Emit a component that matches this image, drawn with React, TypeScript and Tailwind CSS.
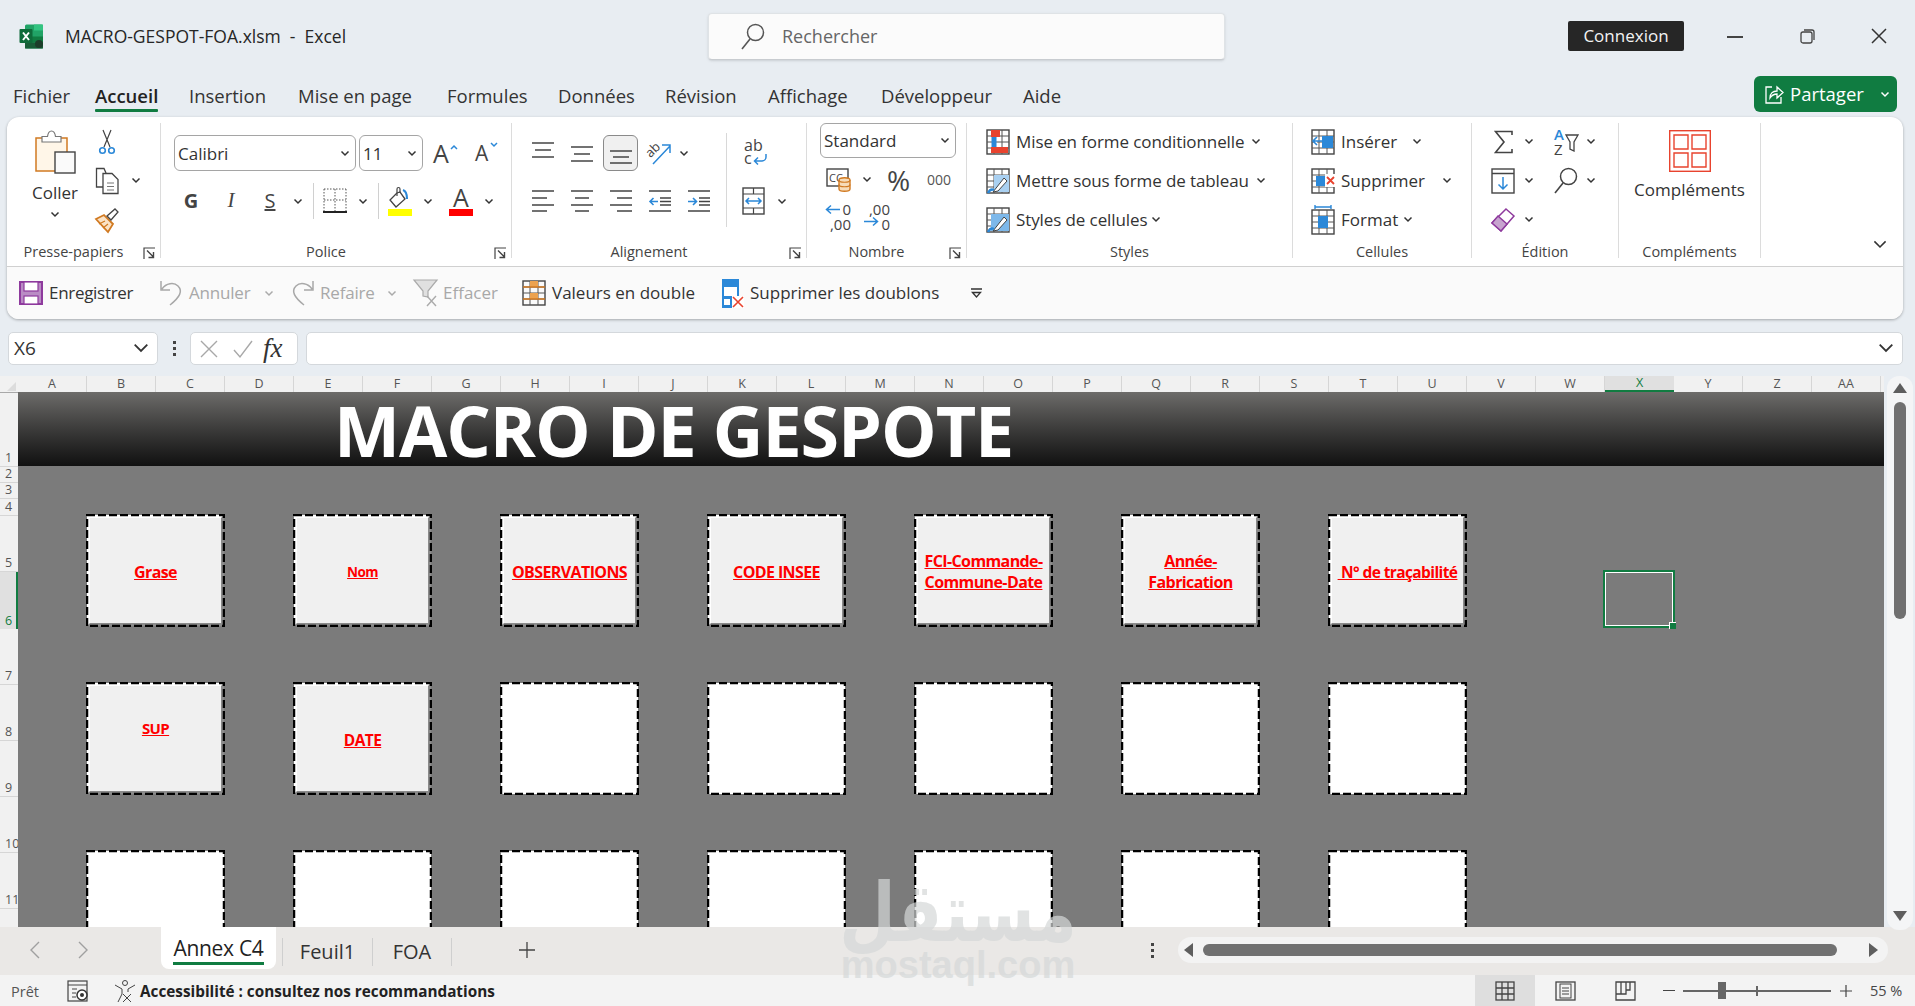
import React from "react";

const DARK = "#444444";
const BLUE = "#2b88d8";
const ORANGE = "#d17a22";
const RED = "#e8432e";

// small dropdown arrow used all over the ribbon
const Chev = ({ color = "#333", w = 10 }: { color?: string; w?: number }) => (
    <svg width={w} height={w * 0.7} viewBox="0 0 10 7" fill="none" className="shrink-0">
        <path d="M1.5 1.5 5 5l3.5-3.5" stroke={color} strokeWidth={w > 10 ? 1 : 1.5} />
    </svg>
);

const Icon = ({ w = 24, h = 24, children }: { w?: number; h?: number; children: React.ReactNode }) => (
    <svg width={w} height={h} viewBox={`0 0 ${w} ${h}`} fill="none" className="shrink-0 overflow-visible">
        {children}
    </svg>
);

const Launcher = () => (
    <Icon w={13} h={13}>
        <path d="M1 12V1h11" stroke={DARK} strokeWidth="1.2" />
        <path d="M4 3.5 10.5 10M10.5 5v5.5H5.5" stroke={DARK} strokeWidth="1.4" />
    </Icon>
);

const ExcelLogo = () => (
    <Icon w={25} h={25}>
        <rect x="6" y="0.5" width="18" height="24" rx="1.5" fill="#21a366" />
        <rect x="15" y="0.5" width="9" height="6" fill="#33c481" />
        <rect x="6" y="12.5" width="9" height="6" fill="#107c41" />
        <rect x="6" y="18.5" width="18" height="6" fill="#185c37" />
        <rect x="15" y="12.5" width="9" height="6" fill="#107c41" />
        <rect x="0.5" y="5" width="13" height="14" rx="1" fill="#0f6b3a" />
        <path d="M4 8.5 10 16M10 8.5 4 16" stroke="#fff" strokeWidth="2" />
        <circle cx="20" cy="20" r="4" fill="#1c3d2a" />
    </Icon>
);

const PasteIcon = () => (
    <Icon w={41} h={44}>
        <rect x="1" y="8" width="31" height="33" fill="#fff6e8" stroke={ORANGE} strokeWidth="1.5" />
        <path d="M7 12V6.5h5.5C13 3 14.5 1 16.5 1S20 3 20.5 6.5H26V12z" fill="#fff" stroke="#777" strokeWidth="1.2" />
        <rect x="20" y="22" width="20" height="21" fill="#fafafa" stroke={DARK} strokeWidth="1.4" />
    </Icon>
);

const ScissorsIcon = () => (
    <Icon w={18} h={26}>
        <path d="M5 1 12 18M13 1 6 18" stroke={DARK} strokeWidth="1.2" />
        <circle cx="4.5" cy="21.5" r="2.8" stroke={BLUE} strokeWidth="1.6" />
        <circle cx="13.5" cy="21.5" r="2.8" stroke={BLUE} strokeWidth="1.6" />
    </Icon>
);

const CopyIcon = () => (
    <Icon w={25} h={28}>
        <path d="M8 20H1.5V1.5H9L11 6" stroke={DARK} strokeWidth="1.3" />
        <path d="M8 6.5h9l6 6v14H8z" fill="#fff" stroke={DARK} strokeWidth="1.3" />
        <path d="M12 16h7M12 19.5h7M12 23h7" stroke="#777" />
    </Icon>
);

const BrushIcon = () => (
    <Icon w={25} h={26}>
        <path d="M1 12 9 8l9 9-5 8z" fill="#fbe3c6" stroke={ORANGE} strokeWidth="1.8" />
        <path d="M4 17l6-3M8 21l5-4" stroke={ORANGE} strokeWidth="1.3" />
        <path d="M12 9l8-7 3 3-7 8z" fill="#fff" stroke={DARK} strokeWidth="1.3" />
    </Icon>
);

const AlignV = ({ pos }: { pos: "top" | "mid" | "bot" }) => {
    const y = pos === "top" ? [2, 9, 16] : pos === "mid" ? [6, 13, 20] : [10, 16, 22];
    return (
        <Icon w={22} h={24}>
            {y.map((v, i) => (
                <path key={i} d={i === 1 ? `M3 ${v}h16` : `M0 ${v}h22`} stroke={DARK} strokeWidth="1.6" />
            ))}
        </Icon>
    );
};

const AlignH = ({ kind }: { kind: "l" | "c" | "r" }) => {
    const d =
        kind === "l"
            ? "M0 3h22M0 10h15M0 17h22M0 23h15"
            : kind === "c"
              ? "M0 3h22M4 10h14M0 17h22M4 23h14"
              : "M0 3h22M7 10h15M0 17h22M7 23h15";
    return (
        <Icon w={22} h={26}>
            <path d={d} stroke={DARK} strokeWidth="1.6" />
        </Icon>
    );
};

const IndentIcon = ({ dir }: { dir: "l" | "r" }) => (
    <Icon w={22} h={26}>
        <path d="M0 3h22M0 23h22M11 10h11M11 17h11M11 13.5h11" stroke={DARK} strokeWidth="1.6" />
        {dir === "l" ? (
            <path d="M9 13.5H1M4.5 10 1 13.5 4.5 17" stroke={BLUE} strokeWidth="1.6" />
        ) : (
            <path d="M0 13.5h8M5 10l3.500 3.500L5 17" stroke={BLUE} strokeWidth="1.6" />
        )}
    </Icon>
);

const OrientIcon = () => (
    <Icon w={26} h={26}>
        <text x="0" y="14" fontSize="13" fill={DARK} transform="rotate(-45 7 12)" fontFamily="Open Sans, sans-serif">ab</text>
        <path d="M6 24 23 6M15 5h8v8" stroke={BLUE} strokeWidth="1.5" />
    </Icon>
);

const WrapIcon = () => (
    <div className="relative w-[24px] h-[28px] leading-[13px] text-[16px] text-[#444]">
        <div>ab</div>
        <div>c</div>
        <svg width="15" height="11" viewBox="0 0 15 11" fill="none" className="absolute left-[9px] top-[15px]">
            <path d="M13 0v3a4 4 0 0 1-4 4H2M5 3.5 1.5 7 5 10.5" stroke={BLUE} strokeWidth="1.5" />
        </svg>
    </div>
);

const MergeIcon = () => (
    <Icon w={23} h={28}>
        <rect x="1" y="1" width="21" height="26" stroke={DARK} strokeWidth="1.4" />
        <path d="M1 7h21M1 21h21M11.5 1v6M11.5 21v6" stroke={DARK} strokeWidth="1.2" />
        <path d="M4 14h15M7 11l-3 3 3 3M16 11l3 3-3 3" stroke={BLUE} strokeWidth="1.5" />
    </Icon>
);

const BorderIcon = () => (
    <Icon w={24} h={28}>
        <path d="M1 2h22M1 2v22M23 2v22M12 2v22M1 13h22" stroke="#555" strokeDasharray="1.5 1.5" />
        <path d="M0 25h24" stroke="#222" strokeWidth="2" />
    </Icon>
);

const FillIcon = () => (
    <Icon w={24} h={30}>
        <path d="M9 7 2 14l6 7 9-8-5-7z" fill="#fff" stroke={DARK} strokeWidth="1.3" />
        <path d="M9 10V3c0-2 3-2 3 0v4" stroke={DARK} strokeWidth="1.2" />
        <path d="M15 4c3 1 4 4 4 9" stroke={BLUE} strokeWidth="2.2" />
        <rect x="0" y="23" width="24" height="7" fill="#ffff00" />
    </Icon>
);

const FontColorIcon = () => (
    <div className="flex flex-col items-center w-[24px] h-[30px]">
        <span className="text-[25px] leading-[23px] text-[#444]">A</span>
        <span className="w-full h-[7px] bg-[#ff0000]" />
    </div>
);

const SheetGrid = ({ children }: { children?: React.ReactNode }) => (
    <Icon w={24} h={26}>
        <rect x="1" y="1" width="22" height="24" stroke={DARK} strokeWidth="1.4" />
        <path d="M1 7h22M1 13h22M1 19h22M8 1v24M16 1v24" stroke="#555" />
        {children}
    </Icon>
);

const CondIcon = () => (
    <SheetGrid>
        <path d="M8 4v19" stroke={BLUE} strokeWidth="5" />
        <rect x="5" y="1" width="9" height="7" fill={RED} />
        <rect x="5" y="18" width="17" height="6" fill={RED} />
    </SheetGrid>
);

const TableIcon = () => (
    <SheetGrid>
        <rect x="8" y="7" width="15" height="17" fill="#a9d0f1" />
        <path d="M7 24 18 10l3 3-9 10z" fill="#fff" stroke={DARK} />
        <path d="M2 25c2-4 4-4 6-3" stroke={BLUE} strokeWidth="2.5" />
    </SheetGrid>
);

const CellStyleIcon = () => (
    <SheetGrid>
        <rect x="5" y="7" width="18" height="17" fill="#7db8ea" />
        <path d="M7 24 18 10l3 3-9 10z" fill="#fff" stroke={DARK} />
        <path d="M2 25c2-4 4-4 6-3" stroke={BLUE} strokeWidth="2.5" />
    </SheetGrid>
);

const InsertIcon = () => (
    <SheetGrid>
        <rect x="11" y="7" width="11" height="12" fill={BLUE} />
        <path d="M12 12H2M6 8l-4 4 4 4" stroke={BLUE} strokeWidth="1.6" fill="#fff" />
    </SheetGrid>
);

const DeleteIcon = () => (
    <SheetGrid>
        <rect x="5" y="8" width="9" height="10" fill={BLUE} />
        <rect x="14" y="6" width="10" height="13" fill="#fff" />
        <path d="M16 9l7 7M23 9l-7 7" stroke={RED} strokeWidth="1.8" />
    </SheetGrid>
);

const FormatIcon = () => (
    <Icon w={24} h={30}>
        <path d="M4 2h16M4 0v4M20 0v4" stroke={BLUE} strokeWidth="1.4" />
        <rect x="1" y="5" width="22" height="24" stroke={DARK} strokeWidth="1.4" />
        <path d="M1 11h22M1 17h22M1 23h22M8 5v24M16 5v24" stroke="#555" />
        <rect x="7" y="11" width="10" height="12" fill={BLUE} />
    </Icon>
);

const SumIcon = () => (
    <Icon w={19} h={24}>
        <path d="M18 5V1.5H1.5L10 12 1.5 22.5H18V19" stroke={DARK} strokeWidth="1.6" />
    </Icon>
);

const SortIcon = () => (
    <div className="relative w-[24px] h-[30px] text-[15px] leading-[15px] text-[#444]">
        <div className="text-[#2b88d8] font-semibold">A</div>
        <div>Z</div>
        <svg width="14" height="18" viewBox="0 0 14 18" fill="none" className="absolute left-[11px] top-[7px]">
            <path d="M1 1h12L9 8v9l-4-2V8z" stroke={DARK} strokeWidth="1.3" />
        </svg>
    </div>
);

const FillDownIcon = () => (
    <Icon w={24} h={26}>
        <rect x="1" y="1" width="22" height="24" stroke={DARK} strokeWidth="1.4" />
        <path d="M1 5.5h22" stroke={DARK} strokeWidth="1.3" />
        <path d="M12 9v12M7.5 16.5 12 21l4.500-4.500" stroke={BLUE} strokeWidth="1.5" />
    </Icon>
);

const SearchIcon = ({ color = DARK }: { color?: string }) => (
    <Icon w={24} h={27}>
        <circle cx="14.5" cy="9.5" r="8" stroke={color} strokeWidth="1.5" />
        <path d="M9 16 1 26" stroke={color} strokeWidth="1.6" />
    </Icon>
);

const EraserIcon = () => (
    <Icon w={24} h={24}>
        <path d="M15 1 23 8 10 23 1 15z" fill="#fff" stroke="#8e3a9d" strokeWidth="1.5" />
        <path d="M7 8 16 16 10 23 1 15z" fill="#c7a4cf" stroke="#8e3a9d" strokeWidth="1.5" />
    </Icon>
);

const AddinsIcon = () => (
    <Icon w={42} h={42}>
        <rect x="0.7" y="0.7" width="40.6" height="40.6" stroke={RED} strokeWidth="1.4" />
        <path d="M5 5h14v14H5zM23 5h14v14H23zM5 23h14v14H5zM23 23h14v14H23z" stroke={RED} strokeWidth="1.4" />
    </Icon>
);

const SaveIcon = () => (
    <Icon w={24} h={24}>
        <path d="M1 1h22v22H1z" fill="#b98cc4" stroke="#8e3a9d" strokeWidth="2" />
        <rect x="5" y="1" width="14" height="9" fill="#fff" stroke="#8e3a9d" strokeWidth="1.2" />
        <rect x="5" y="15" width="14" height="8" fill="#fff" stroke="#8e3a9d" strokeWidth="1.2" />
    </Icon>
);

const UndoIcon = ({ flip }: { flip?: boolean }) => (
    <svg width="23" height="28" viewBox="0 0 23 28" fill="none" className={flip ? "shrink-0 -scale-x-100" : "shrink-0"}>
        <path d="M1 2v9h9M2 10c4-6 12-7 16-3 5 5 2 11-8 19" stroke="#a8a8a8" strokeWidth="1.5" />
    </svg>
);

const ClearFilterIcon = () => (
    <Icon w={25} h={28}>
        <path d="M1 1h23l-9 11v6l-5-1v-5z" fill="#e0e0e0" stroke="#aaa" strokeWidth="1.2" />
        <path d="M14 17l9 10M23 17l-9 10" stroke="#aaa" strokeWidth="1.4" />
    </Icon>
);

const DupIcon = () => (
    <Icon w={24} h={26}>
        <rect x="1" y="1" width="22" height="24" stroke={DARK} strokeWidth="1.4" />
        <path d="M1 7h22M1 13h22M1 19h22M8 1v24M16 1v24" stroke="#555" />
        <rect x="8" y="1" width="8" height="6" fill="#eca24f" />
        <rect x="8" y="13" width="8" height="6" fill="#eca24f" />
        <path d="M1 7h22M1 19h22" stroke={ORANGE} strokeWidth="1.5" />
    </Icon>
);

const RemoveDupIcon = () => (
    <Icon w={22} h={29}>
        <rect x="0" y="0" width="17" height="29" fill={BLUE} />
        <rect x="2" y="8" width="13" height="9" fill="#fff" />
        <rect x="2" y="20" width="6" height="6" fill="#fff" />
        <rect x="10" y="17" width="12" height="12" fill="#fff" />
        <path d="M11 18l10 10M21 18 11 28" stroke={RED} strokeWidth="1.6" />
    </Icon>
);

const CcyIcon = () => (
    <Icon w={25} h={24}>
        <rect x="1" y="1" width="21" height="17" fill="#fff" stroke={DARK} strokeWidth="1.4" />
        <text x="3" y="14" fontSize="11" fill={DARK} fontFamily="Open Sans, sans-serif">CC</text>
        <path d="M13 12c0-3 11-3 11 0v9c0 3-11 3-11 0z" fill="#f7dcb9" stroke={ORANGE} strokeWidth="1.4" />
        <path d="M13 12c0 3 11 3 11 0M13 16.5c0 3 11 3 11 0" stroke={ORANGE} strokeWidth="1.2" />
    </Icon>
);

const DecimalIcon = ({ more }: { more?: boolean }) => (
    <div className="relative w-[26px] h-[30px] text-[15px] leading-[15px] text-[#444] text-right">
        <div>{more ? ",00" : "0"}</div>
        <div>{more ? "0" : ",00"}</div>
        <svg width="15" height="11" viewBox="0 0 15 11" fill="none" className={more ? "absolute left-0 top-[14px]" : "absolute left-0 top-[2px]"}>
            {more ? (
                <path d="M0 5.5h13M9 1.5l4.500 4-4.500 4" stroke={BLUE} strokeWidth="1.5" />
            ) : (
                <path d="M15 5.5H2M6 1.5l-4.500 4 4.500 4" stroke={BLUE} strokeWidth="1.5" />
            )}
        </svg>
    </div>
);

const Combo = ({ label, className }: { label: string; className: string }) => (
    <div className={`flex items-center justify-between pl-[3px] pr-[5px] bg-white border border-[#a5a5a5] rounded-[6px] text-[#333] ${className}`}>
        <span className="text-[17px] leading-none">{label}</span>
        <Chev />
    </div>
);

const Group = ({ label, w, launcher, children }: { label: string; w: string; launcher?: boolean; children: React.ReactNode }) => (
    <div className={`${w} h-[135px] border-r border-[#dcdcdc] shrink-0 flex flex-col`}>
        <div className="h-[119px] shrink-0">{children}</div>
        <div className={launcher ? "relative h-[20px] pr-[20px] flex items-center justify-center text-[14.5px] text-[#444]" : "relative h-[20px] flex items-center justify-center text-[14.5px] text-[#444]"}>
            {label}
            {launcher && (
                <span className="absolute right-[4px] top-[5px]">
                    <Launcher />
                </span>
            )}
        </div>
    </div>
);

const Row39 = ({ children, className = "" }: { children: React.ReactNode; className?: string }) => (
    <div className={`h-[39px] flex items-center ${className}`}>{children}</div>
);

const TabLink = ({ label, w, active }: { label: string; w: string; active?: boolean }) => (
    <div className={`${w} shrink-0 h-[36px] flex items-start pt-[7px]`}>
        <span className={active ? "relative font-semibold text-[#222] text-[18.5px] leading-[26px]" : "text-[#333] text-[18.5px] leading-[26px] whitespace-nowrap"}>
            {label}
            {active && <span className="absolute left-0 right-0 top-[26px] h-[3px] bg-[#107c41] rounded-[1px]" />}
        </span>
    </div>
);

const BOXES: { lines?: string[]; size?: string; blank?: boolean; offset?: string }[] = [
    { lines: ["Grase"], size: "text-[16px]", offset: "pt-[4px]" },
    { lines: ["Nom"], size: "text-[13.5px]", offset: "pt-[4px]" },
    { lines: ["OBSERVATIONS"], size: "text-[16px]", offset: "pt-[4px]" },
    { lines: ["CODE INSEE"], size: "text-[16px]", offset: "pt-[4px]" },
    { lines: ["FCI-Commande-", "Commune-Date"], size: "text-[16px]", offset: "pt-[2px]" },
    { lines: ["Année-", "Fabrication"], size: "text-[16px]", offset: "pt-[2px]" },
    { lines: ["\u00a0N° de traçabilité"], size: "text-[15.5px]", offset: "pt-[4px]" },
    { lines: ["SUP"], size: "text-[15px]", offset: "pb-[20px]" },
    { lines: ["DATE"], size: "text-[15.5px]", offset: "pt-[4px]" },
    ...Array.from({ length: 12 }, () => ({ blank: true })),
];

const ShapeBox = ({ lines, size, blank, offset }: { lines?: string[]; size?: string; blank?: boolean; offset?: string }) => (
    <div className="relative w-[139px] h-[113px]">
        {blank ? (
            <div className="absolute inset-[1px] bg-white" />
        ) : (
            <div className={`absolute inset-[1px] flex flex-col items-center justify-center bg-[#f0f0f0] border-t-[3px] border-l-[3px] border-t-white border-l-white border-r-[3px] border-b-[3px] border-r-[#8a8a8a] border-b-[#8a8a8a] font-bold tracking-[-0.6px] leading-[21px] text-[#ff0000] underline ${size} ${offset || ""}`}>
                {lines?.map((l) => (
                    <span key={l} className="whitespace-pre">{l}</span>
                ))}
            </div>
        )}
        <svg width="139" height="113" className="absolute inset-0">
            <rect x="1" y="1" width="137" height="111" fill="none" stroke="#000" strokeWidth="2.5" strokeDasharray="8 3" />
        </svg>
    </div>
);

const COLS = "A B C D E F G H I J K L M N O P Q R S T U V W X Y Z AA".split(" ");
const ROWS: [string, string][] = [
    ["1", "h-[74px]"],
    ["2", "h-[16px]"],
    ["3", "h-[16px]"],
    ["4", "h-[17px]"],
    ["5", "h-[56px]"],
    ["6", "h-[57px]"],
    ["7", "h-[56px]"],
    ["8", "h-[56px]"],
    ["9", "h-[56px]"],
    ["10", "h-[56px]"],
    ["11", "h-[56px]"],
];

export default function App() {
    return (
        <div className="relative w-[1915px] h-[1006px] overflow-hidden flex flex-col bg-[#e8edf2] font-['Open_Sans',sans-serif] text-[#333]">
            {/* title bar */}
            <div className="h-[76px] shrink-0 flex items-start">
                <div className="w-[708px] shrink-0 flex items-center h-[25px] mt-[24px] pl-[19px]">
                    <ExcelLogo />
                    <span className="ml-[21px] text-[17.5px] text-[#262626] whitespace-pre">MACRO-GESPOT-FOA.xlsm  -  Excel</span>
                </div>
                <div className="w-[517px] h-[47px] mt-[13px] shrink-0 flex items-center pl-[32px] rounded-[4px] bg-[#fbfbfb] border border-[#dfe3e6] border-b-[#c8ccd0] shadow-sm">
                    <SearchIcon color="#555" />
                    <span className="ml-[17px] text-[18px] text-[#666]">Rechercher</span>
                </div>
                <div className="ml-[343px] mt-[21px] w-[116px] h-[30px] shrink-0 flex items-center justify-center rounded-[2px] bg-[#262626] text-[#f3f3f3] text-[17px]">Connexion</div>
                <div className="ml-[43px] mt-[36px] w-[16px] h-[2px] bg-[#444]" />
                <div className="ml-[57px] mt-[29px]">
                    <Icon w={15} h={15}>
                        <rect x="1" y="3" width="11" height="11" rx="2" stroke={DARK} strokeWidth="1.3" />
                        <path d="M4 1h8a2 2 0 0 1 2 2v8" stroke={DARK} strokeWidth="1.3" />
                    </Icon>
                </div>
                <div className="ml-[56px] mt-[28px]">
                    <Icon w={16} h={16}>
                        <path d="M1 1l14 14M15 1 1 15" stroke="#333" strokeWidth="1.5" />
                    </Icon>
                </div>
            </div>

            {/* tabs */}
            <div className="h-[41px] shrink-0 flex items-start pl-[13px]">
                <TabLink label="Fichier" w="w-[82px]" />
                <TabLink label="Accueil" w="w-[94px]" active />
                <TabLink label="Insertion" w="w-[109px]" />
                <TabLink label="Mise en page" w="w-[149px]" />
                <TabLink label="Formules" w="w-[111px]" />
                <TabLink label="Données" w="w-[107px]" />
                <TabLink label="Révision" w="w-[103px]" />
                <TabLink label="Affichage" w="w-[113px]" />
                <TabLink label="Développeur" w="w-[142px]" />
                <TabLink label="Aide" w="w-[731px]" />
                <div className="w-[143px] h-[36px] shrink-0 flex items-center pl-[11px] rounded-[6px] bg-[#107c41] text-white text-[18.5px]">
                    <Icon w={18} h={20}>
                        <path d="M7 3H1v16h15v-6" stroke="#fff" strokeWidth="1.3" />
                        <path d="M5 14c0-5 3-7 7-7V3l6 5.5-6 5.500V10c-3 0-5 1-7 4z" stroke="#fff" strokeWidth="1.3" />
                    </Icon>
                    <span className="ml-[7px]">Partager</span>
                    <span className="ml-[16px]"><Chev color="#fff" /></span>
                </div>
            </div>

            {/* ribbon */}
            <div className="ml-[7px] w-[1896px] h-[202px] shrink-0 flex flex-col rounded-[12px] overflow-hidden bg-white shadow-[0_1px_3px_rgba(0,0,0,0.3)]">
                <div className="h-[150px] shrink-0 flex pt-[6px] border-b border-[#d0d0d0]">
                    <Group label="Presse-papiers" w="w-[154px]" launcher>
                        <div className="flex">
                            <div className="ml-[8px] w-[80px] flex flex-col items-center pt-[7px]">
                                <PasteIcon />
                                <span className="mt-[7px] text-[17px] leading-[24px]">Coller</span>
                                <span className="mt-[6px]"><Chev /></span>
                            </div>
                            <div className="flex flex-col -mt-[1px]">
                                <Row39 className="pl-[3px]"><ScissorsIcon /></Row39>
                                <Row39>
                                    <CopyIcon />
                                    <span className="ml-[11px]"><Chev /></span>
                                </Row39>
                                <Row39><BrushIcon /></Row39>
                            </div>
                        </div>
                    </Group>

                    <Group label="Police" w="w-[351px]" launcher>
                        <div className="flex items-center h-[36px] mt-[12px] pl-[13px]">
                            <Combo label="Calibri" className="w-[182px] h-[36px]" />
                            <Combo label="11" className="ml-[3px] w-[64px] h-[36px]" />
                            <div className="ml-[10px] relative w-[24px] text-[25px] leading-none text-[#444]">
                                A<svg width="8" height="6" viewBox="0 0 8 6" fill="none" className="absolute left-[17px] top-[3px]"><path d="M1 5l3-3 3 3" stroke={BLUE} strokeWidth="1.5" /></svg>
                            </div>
                            <div className="ml-[18px] relative w-[22px] text-[21px] leading-none text-[#444]">
                                A<svg width="8" height="6" viewBox="0 0 8 6" fill="none" className="absolute left-[15px] top-[-1px]"><path d="M1 1l3 3 3-3" stroke={BLUE} strokeWidth="1.5" /></svg>
                            </div>
                        </div>
                        <div className="flex items-center h-[36px] mt-[12px] pl-[10px] text-[#444]">
                            <span className="w-[40px] text-center text-[20px] font-bold">G</span>
                            <span className="w-[40px] text-center text-[21px] italic font-['Liberation_Serif']">I</span>
                            <span className="w-[38px] text-center text-[20px] underline">S</span>
                            <span className="w-[18px] flex justify-center"><Chev /></span>
                            <span className="ml-[6px] w-px h-[36px] bg-[#d0d0d0]" />
                            <span className="ml-[9px]"><BorderIcon /></span>
                            <span className="ml-[11px] mr-[3px]"><Chev /></span>
                            <span className="ml-[7px] w-px h-[36px] bg-[#d0d0d0]" />
                            <span className="ml-[9px]"><FillIcon /></span>
                            <span className="ml-[11px] mr-[3px]"><Chev /></span>
                            <span className="ml-[13px]"><FontColorIcon /></span>
                            <span className="ml-[11px]"><Chev /></span>
                        </div>
                    </Group>

                    <Group label="Alignement" w="w-[295px]" launcher>
                        <div className="flex">
                            <div className="w-[214px] shrink-0 pl-[11px]">
                                <div className="flex items-center h-[36px] mt-[12px]">
                                    <span className="w-[39px] flex justify-center"><AlignV pos="top" /></span>
                                    <span className="w-[39px] flex justify-center"><AlignV pos="mid" /></span>
                                    <span className="w-[39px] flex justify-center">
                                        <span className="w-[35px] h-[36px] flex items-center justify-center rounded-[6px] bg-[#f0f0f0] border border-[#8a8a8a]"><AlignV pos="bot" /></span>
                                    </span>
                                    <span className="w-[39px] flex justify-center"><OrientIcon /></span>
                                    <Chev />
                                </div>
                                <div className="flex items-center h-[36px] mt-[12px]">
                                    <span className="w-[39px] flex justify-center"><AlignH kind="l" /></span>
                                    <span className="w-[39px] flex justify-center"><AlignH kind="c" /></span>
                                    <span className="w-[39px] flex justify-center"><AlignH kind="r" /></span>
                                    <span className="w-[39px] flex justify-center"><IndentIcon dir="l" /></span>
                                    <span className="w-[39px] flex justify-center"><IndentIcon dir="r" /></span>
                                </div>
                            </div>
                            <span className="w-px h-[94px] mt-[10px] bg-[#d8d8d8]" />
                            <div className="pl-[15px]">
                                <div className="flex items-center h-[36px] mt-[12px] pl-[2px]"><WrapIcon /></div>
                                <div className="flex items-center h-[36px] mt-[12px]">
                                    <MergeIcon />
                                    <span className="ml-[12px]"><Chev /></span>
                                </div>
                            </div>
                        </div>
                    </Group>

                    <Group label="Nombre" w="w-[160px]" launcher>
                        <div className="pl-[13px]">
                            <Combo label="Standard" className="w-[136px] h-[35px]" />
                            <div className="flex items-center h-[39px] mt-[2px] pl-[6px]">
                                <CcyIcon />
                                <span className="ml-[11px]"><Chev /></span>
                                <span className="ml-[15px] w-[24px] text-[28px] leading-none text-[#444]">%</span>
                                <span className="ml-[16px] text-[14px] text-[#555]">000</span>
                            </div>
                            <div className="flex items-center h-[36px] pl-[5px]">
                                <DecimalIcon />
                                <span className="ml-[13px]"><DecimalIcon more /></span>
                            </div>
                        </div>
                    </Group>

                    <Group label="Styles" w="w-[326px]">
                        <div className="-mt-[1px] pl-[19px] text-[17px] tracking-[-0.1px] text-[#333]">
                            <Row39><CondIcon /><span className="ml-[6px] w-[235px] whitespace-nowrap">Mise en forme conditionnelle</span><Chev /></Row39>
                            <Row39><TableIcon /><span className="ml-[6px] w-[240px] whitespace-nowrap">Mettre sous forme de tableau</span><Chev /></Row39>
                            <Row39><CellStyleIcon /><span className="ml-[6px] w-[135px] whitespace-nowrap">Styles de cellules</span><Chev /></Row39>
                        </div>
                    </Group>

                    <Group label="Cellules" w="w-[179px]">
                        <div className="-mt-[1px] pl-[18px] text-[17px] text-[#333]">
                            <Row39><InsertIcon /><span className="ml-[6px] w-[71px]">Insérer</span><Chev /></Row39>
                            <Row39><DeleteIcon /><span className="ml-[6px] w-[101px]">Supprimer</span><Chev /></Row39>
                            <Row39><FormatIcon /><span className="ml-[6px] w-[62px]">Format</span><Chev /></Row39>
                        </div>
                    </Group>

                    <Group label="Édition" w="w-[147px]">
                        <div className="-mt-[1px] pl-[19px]">
                            <Row39>
                                <span className="w-[24px] flex justify-center"><SumIcon /></span>
                                <span className="ml-[9px]"><Chev /></span>
                                <span className="ml-[20px]"><SortIcon /></span>
                                <span className="ml-[8px]"><Chev /></span>
                            </Row39>
                            <Row39>
                                <FillDownIcon />
                                <span className="ml-[9px]"><Chev /></span>
                                <span className="ml-[20px]"><SearchIcon /></span>
                                <span className="ml-[8px]"><Chev /></span>
                            </Row39>
                            <Row39>
                                <EraserIcon />
                                <span className="ml-[9px]"><Chev /></span>
                            </Row39>
                        </div>
                    </Group>

                    <Group label="Compléments" w="w-[142px]">
                        <div className="flex flex-col items-center pt-[7px]">
                            <AddinsIcon />
                            <span className="mt-[6px] text-[17px] leading-[24px]">Compléments</span>
                        </div>
                    </Group>

                    <div className="flex-1 flex items-end justify-end pr-[15px] pb-[16px]">
                        <Chev w={16} />
                    </div>
                </div>

                {/* quick access */}
                <div className="flex-1 flex items-center bg-[#fafafa] text-[17px] text-[#333] pl-[12px]">
                    <SaveIcon />
                    <span className="ml-[6px] w-[111px] tracking-[-0.3px]">Enregistrer</span>
                    <UndoIcon />
                    <span className="ml-[6px] w-[75px] text-[#a8a8a8] tracking-[-0.2px]">Annuler</span>
                    <span className="w-[27px]"><Chev color="#aaa" /></span>
                    <UndoIcon flip />
                    <span className="ml-[6px] w-[67px] text-[#a8a8a8] tracking-[-0.2px]">Refaire</span>
                    <span className="w-[26px]"><Chev color="#aaa" /></span>
                    <ClearFilterIcon />
                    <span className="ml-[5px] w-[79px] text-[#a8a8a8]">Effacer</span>
                    <DupIcon />
                    <span className="ml-[6px] w-[170px] whitespace-nowrap">Valeurs en double</span>
                    <RemoveDupIcon />
                    <span className="ml-[6px] w-[221px] whitespace-nowrap">Supprimer les doublons</span>
                    <svg width="11" height="11" viewBox="0 0 11 11" fill="none">
                        <path d="M0 1h11M1.5 4.5 5.5 9l4-4.500z" stroke="#333" strokeWidth="1.3" />
                    </svg>
                </div>
            </div>

            {/* formula bar */}
            <div className="h-[33px] mt-[13px] shrink-0 flex pl-[8px]">
                <div className="w-[150px] shrink-0 flex items-center justify-between pl-[5px] pr-[7px] bg-white border border-[#d4d8dc] rounded-[5px] text-[19px]">
                    X6
                    <Chev w={18} />
                </div>
                <div className="w-[32px] shrink-0 flex flex-col items-center justify-center gap-[3px]">
                    <span className="w-[3px] h-[3px] bg-[#444]" />
                    <span className="w-[3px] h-[3px] bg-[#444]" />
                    <span className="w-[3px] h-[3px] bg-[#444]" />
                </div>
                <div className="w-[108px] shrink-0 flex items-center pl-[9px] bg-white border border-[#d4d8dc] rounded-[5px]">
                    <Icon w={18} h={18}>
                        <path d="M1 1l16 16M17 1 1 17" stroke="#a8a8a8" strokeWidth="1.4" />
                    </Icon>
                    <span className="ml-[15px]">
                        <Icon w={20} h={18}>
                            <path d="M1 10l6 7L19 1" stroke="#a8a8a8" strokeWidth="1.4" />
                        </Icon>
                    </span>
                    <span className="ml-[10px] text-[27px] leading-none italic font-['Liberation_Serif'] text-[#333]">fx</span>
                </div>
                <div className="ml-[8px] flex-1 mr-[12px] flex items-center justify-end pr-[7px] bg-white border border-[#d4d8dc] rounded-[5px]">
                    <Chev w={18} />
                </div>
            </div>

            {/* column headers */}
            <div className="h-[16px] mt-[11px] shrink-0 flex">
                <div className="w-[18px] shrink-0 bg-[#f1f1f1] flex items-end justify-end">
                    <span className="border-l-[9px] border-b-[9px] border-l-transparent border-b-[#dcdcdc] mr-[2px] mb-[1px]" />
                </div>
                {COLS.map((c) => (
                    <div
                        key={c}
                        className={
                            c === "X"
                                ? "w-[69px] shrink-0 flex items-center justify-center text-[12.5px] leading-none text-[#107c41] bg-[#e0e0e0] border-b-2 border-b-[#107c41]"
                                : "w-[69px] shrink-0 flex items-center justify-center text-[12.5px] leading-none text-[#555] bg-[#f1f1f1] border-r border-[#d6d6d6]"
                        }
                    >
                        {c}
                    </div>
                ))}
                <div className="w-[3px] shrink-0 bg-[#f1f1f1]" />
            </div>

            {/* sheet */}
            <div className="h-[535px] shrink-0 flex">
                <div className="w-[18px] shrink-0 flex flex-col bg-[#f1f1f1] border-t border-[#a8a8a8]">
                    {ROWS.map(([n, h]) => (
                        <div
                            key={n}
                            className={
                                n === "6"
                                    ? `${h} shrink-0 flex items-end pl-[5px] text-[12.5px] leading-[16px] text-[#107c41] bg-[#e0e0e0] border-r-2 border-r-[#107c41]`
                                    : `${h} shrink-0 flex items-end pl-[5px] text-[12.5px] leading-[16px] text-[#555] border-b border-[#d6d6d6]`
                            }
                        >
                            {n}
                        </div>
                    ))}
                </div>
                <div className="relative w-[1866px] shrink-0 overflow-hidden bg-[#7b7b7b]">
                    <div className="h-[74px] flex items-center pl-[316px] pt-[2px] bg-gradient-to-b from-[#6d6c6a] to-[#111111]">
                        <span className="text-[70px] leading-[72px] font-bold tracking-[-1.05px] text-white whitespace-nowrap">MACRO DE GESPOTE</span>
                    </div>
                    <div className="grid grid-cols-[repeat(7,139px)] gap-x-[68px] gap-y-[55px] pt-[48px] pl-[68px]">
                        {BOXES.map((b, i) => (
                            <ShapeBox key={i} {...b} />
                        ))}
                    </div>
                    {/* selected cell X6 */}
                    <div className="absolute left-[1585px] top-[178px] w-[72px] h-[58px] border-2 border-[#107c41]">
                        <div className="w-full h-full border border-white" />
                        <span className="absolute right-[-3px] bottom-[-3px] w-[7px] h-[7px] bg-[#107c41] border-l border-t border-white" />
                    </div>
                </div>
                {/* vertical scrollbar */}
                <div className="relative z-10 w-[31px] shrink-0 pl-[3px]">
                    <div className="w-[26px] h-[554px] -mt-[16px] bg-[#f4f5f6] rounded-[12px] flex flex-col items-center pt-[7px]">
                        <span className="border-x-[7px] border-b-[10px] border-x-transparent border-b-[#5e5e5e]" />
                        <span className="mt-[9px] w-[12px] h-[217px] rounded-[6px] bg-[#707070]" />
                        <span className="mt-auto mb-[9px] border-x-[7px] border-t-[10px] border-x-transparent border-t-[#5e5e5e]" />
                    </div>
                </div>
            </div>

            {/* sheet tabs */}
            <div className="h-[48px] shrink-0 flex items-start bg-[#eae8e6]">
                <div className="w-[161px] shrink-0 flex items-center h-[46px] pl-[29px] gap-[36px]">
                    <Icon w={12} h={18}><path d="M10 1 2 9l8 8" stroke="#a0a0a0" strokeWidth="1.4" /></Icon>
                    <Icon w={12} h={18}><path d="M2 1l8 8-8 8" stroke="#a0a0a0" strokeWidth="1.4" /></Icon>
                </div>
                <div className="w-[115px] h-[42px] shrink-0 flex flex-col items-center bg-white rounded-b-[8px] pt-[6px] text-[21px] leading-[30px] text-[#222]">
                    <span className="relative tracking-[-0.3px]">Annex C4<span className="absolute left-0 right-0 top-[29px] h-[3px] bg-[#107c41]" /></span>
                </div>
                <div className="flex items-center h-[46px] text-[#333] text-[20px] pt-[4px]">
                    <span className="ml-[6px] w-px h-[28px] bg-[#cfcfcf]" />
                    <span className="w-[89px] text-center">Feuil1</span>
                    <span className="w-px h-[28px] bg-[#cfcfcf]" />
                    <span className="w-[78px] text-center">FOA</span>
                    <span className="w-px h-[28px] bg-[#cfcfcf]" />
                </div>
                <div className="ml-[67px] h-[46px] flex items-center">
                    <Icon w={16} h={16}><path d="M8 0v16M0 8h16" stroke={DARK} strokeWidth="1.3" /></Icon>
                </div>
                <div className="ml-[616px] h-[46px] w-[3px] flex flex-col items-center justify-center gap-[3px]">
                    <span className="w-[3px] h-[3px] bg-[#444]" />
                    <span className="w-[3px] h-[3px] bg-[#444]" />
                    <span className="w-[3px] h-[3px] bg-[#444]" />
                </div>
                <div className="ml-[24px] mt-[10px] w-[710px] h-[26px] flex items-center rounded-[13px] bg-[#f3f3f3] pl-[6px]">
                    <span className="border-y-[7px] border-r-[9px] border-y-transparent border-r-[#5e5e5e]" />
                    <span className="ml-[10px] w-[634px] h-[12px] rounded-[6px] bg-[#707070]" />
                    <span className="ml-[32px] border-y-[7px] border-l-[9px] border-y-transparent border-l-[#5e5e5e]" />
                </div>
            </div>

            {/* status bar */}
            <div className="flex-1 flex items-center bg-[#f3f3f3] text-[14.5px]">
                <span className="ml-[11px] w-[56px] text-[#555] pt-[2px]">Prêt</span>
                <Icon w={23} h={24}>
                    <rect x="1" y="2" width="19" height="20" stroke={DARK} strokeWidth="1.2" />
                    <path d="M1 6h19M5 10h5M5 14h4M5 18h4" stroke={DARK} />
                    <circle cx="15" cy="16" r="5" fill="#fff" stroke="#333" strokeWidth="1.5" />
                    <circle cx="15" cy="16" r="2" fill="#333" />
                </Icon>
                <span className="ml-[24px]">
                    <Icon w={22} h={24}>
                        <circle cx="11" cy="4" r="2.5" stroke={DARK} />
                        <path d="M1 6l7 4v5l-4 8M21 6l-7 4v3M9 15l8 8M17 15l-8 8" stroke={DARK} />
                    </Icon>
                </span>
                <span className="ml-[4px] w-[355px] pt-[2px] font-bold text-[15.3px] text-[#222] whitespace-nowrap">Accessibilité : consultez nos recommandations</span>
                <div className="ml-[980px] w-[60px] h-[31px] flex items-center justify-center bg-[#dedede]">
                    <Icon w={20} h={20}>
                        <rect x="1" y="1" width="18" height="18" stroke={DARK} strokeWidth="1.3" />
                        <path d="M7 1v18M13 1v18M1 7h18M1 13h18" stroke={DARK} strokeWidth="1.3" />
                    </Icon>
                </div>
                <span className="ml-[20px]">
                    <Icon w={21} h={20}>
                        <rect x="1" y="1" width="19" height="18" stroke={DARK} strokeWidth="1.3" />
                        <rect x="5" y="3" width="11" height="14" stroke={DARK} />
                        <path d="M7 7h7M7 10h7M7 13h7" stroke={DARK} />
                    </Icon>
                </span>
                <span className="ml-[39px]">
                    <Icon w={21} h={20}>
                        <path d="M1 1h19v18H1zM1 13h10V1M6 1v12M15 1v8H11" stroke={DARK} strokeWidth="1.3" />
                    </Icon>
                </span>
                <span className="ml-[27px] w-[12px] h-[1.5px] bg-[#444]" />
                <div className="relative ml-[8px] w-[148px] h-[2px] bg-[#666]">
                    <span className="absolute left-[35px] top-[-8px] w-[8px] h-[17px] bg-[#666]" />
                    <span className="absolute left-[73px] top-[-4px] w-[2px] h-[10px] bg-[#666]" />
                </div>
                <span className="ml-[9px]"><Icon w={12} h={12}><path d="M6 0v12M0 6h12" stroke={DARK} strokeWidth="1.2" /></Icon></span>
                <span className="ml-[18px] text-[#444] whitespace-nowrap">55 %</span>
            </div>

            {/* watermark */}
            <div className="absolute left-[842px] top-[881px] w-[232px] flex flex-col items-center pointer-events-none opacity-70 text-[#d5d8d8]">
                <span dir="rtl" className="font-['DejaVu_Sans'] font-bold text-[65px] leading-[64px] scale-y-125">مستقل</span>
                <span className="font-['Liberation_Sans'] font-bold text-[38px] leading-[40px]">mostaql.com</span>
            </div>
        </div>
    );
}
